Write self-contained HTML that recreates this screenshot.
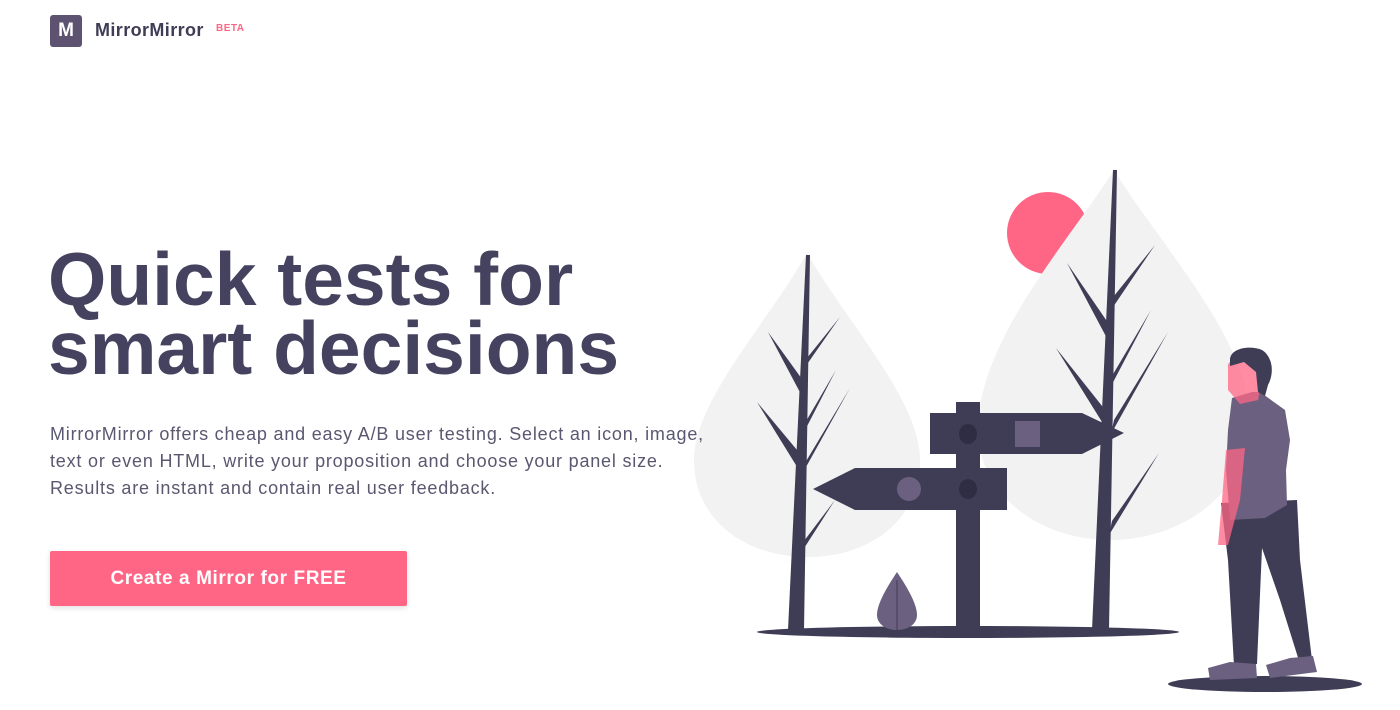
<!DOCTYPE html>
<html><head><meta charset="utf-8"><style>
*{margin:0;padding:0;box-sizing:border-box}
body{width:1400px;height:710px;background:#fff;font-family:"Liberation Sans",sans-serif;position:relative;overflow:hidden}
.logo{position:absolute;left:50px;top:15px;width:32px;height:32px;background:#5d5370;border-radius:3px;color:#fff;font-weight:bold;font-size:19px;text-align:center;line-height:32px}
.brand{position:absolute;left:95px;top:20px;font-weight:bold;font-size:18px;letter-spacing:.4px;color:#3f3d56}
.beta{position:absolute;left:216px;top:23px;font-weight:bold;font-size:10px;letter-spacing:.5px;color:#ff6584}
h1{position:absolute;left:48px;top:245px;font-size:75px;line-height:69px;color:#45425f;font-weight:bold;z-index:2}
p{position:absolute;left:50px;top:421px;font-size:18px;line-height:27px;color:#5a5870;white-space:nowrap;letter-spacing:.8px;z-index:2}
.btn{position:absolute;left:50px;top:551px;width:357px;height:55px;background:#ff6584;color:#fff;font-weight:bold;font-size:19px;letter-spacing:.6px;text-align:center;line-height:55px;border-radius:2px;box-shadow:0 2px 6px rgba(0,0,0,.12)}
svg{position:absolute;left:0;top:0;z-index:1}
</style></head><body>
<div class="logo">M</div>
<div class="brand">MirrorMirror</div>
<div class="beta">BETA</div>
<h1>Quick tests for<br>smart decisions</h1>
<p>MirrorMirror offers cheap and easy A/B user testing. Select an icon, image,<br>text or even HTML, write your proposition and choose your panel size.<br>Results are instant and contain real user feedback.</p>
<div class="btn">Create a Mirror for FREE</div>
<svg width="1400" height="710" viewBox="0 0 1400 710">
<circle cx="1048" cy="233" r="41" fill="#ff6584"/>
<path d="M1114,170 C1070,240 978,340 978,430 C978,495 1040,540 1110,540 C1185,540 1250,490 1250,420 C1250,340 1160,245 1114,170Z" fill="#f2f2f2"/>
<path d="M807,253 C770,320 694,400 694,460 C694,520 745,557 808,557 C870,557 920,520 920,460 C920,400 845,320 807,253Z" fill="#f2f2f2"/>
<g fill="#3f3d56">
<path d="M806,255 L810,255 L804,630 L788,630Z"/>
<path d="M768,332 L807,386 L803,398Z"/>
<path d="M840,317 L807,358 L803,370Z"/>
<path d="M836,370 L805,423 L802,436Z"/>
<path d="M757,402 L802,456 L799,470Z"/>
<path d="M850,388 L805,463 L801,476Z"/>
<path d="M835,500 L804,541 L801,553Z"/>
<path d="M1113,170 L1117,170 L1109,630 L1092,630Z"/>
<path d="M1067,263 L1113,330 L1110,344Z"/>
<path d="M1155,245 L1114,296 L1111,310Z"/>
<path d="M1151,310 L1112,376 L1109,390Z"/>
<path d="M1056,348 L1110,416 L1107,430Z"/>
<path d="M1168,332 L1114,420 L1111,434Z"/>
<path d="M1159,453 L1112,521 L1109,535Z"/>
<ellipse cx="968" cy="632" rx="211" ry="6"/>
<rect x="956" y="402" width="24" height="232"/>
<path d="M930,413 L1082,413 L1124,433 L1082,454 L930,454Z"/>
<path d="M1007,468 L855,468 L813,489 L855,510 L1007,510Z"/>
<ellipse cx="1265" cy="684" rx="97" ry="8"/>
</g>
<ellipse cx="968" cy="434" rx="9" ry="10" fill="#2f2d44"/>
<rect x="1015" y="421" width="25" height="26" fill="#6c6080"/>
<ellipse cx="909" cy="489" rx="12" ry="12" fill="#6c6080"/>
<ellipse cx="968" cy="489" rx="9" ry="10" fill="#2f2d44"/>
<path d="M897,572 C885,590 877,605 877,615 C877,624 886,630 897,630 C908,630 917,624 917,615 C917,605 909,590 897,572Z" fill="#6c6080"/>
<path d="M897,580 L897,630" stroke="#3f3d56" stroke-width="1"/>
<path d="M1221,503 L1297,500 L1300,560 L1312,660 L1300,664 L1280,600 L1262,548 L1257,664 L1234,666 L1228,560Z" fill="#3f3d56"/>
<path d="M1208,668 L1230,662 L1256,664 L1257,678 L1210,680Z" fill="#6c6080"/>
<path d="M1266,665 L1290,658 L1313,656 L1317,672 L1270,678Z" fill="#6c6080"/>
<path d="M1232,398 L1252,392 L1260,392 L1285,410 L1290,440 L1286,470 L1287,505 L1265,518 L1230,520 L1226,470 L1228,430Z" fill="#6c6080"/>
<path d="M1226,450 L1245,448 L1240,500 L1228,545 L1218,545 L1222,500Z" fill="#ff6584" opacity=".75"/>
<path d="M1228,368 C1226,360 1240,355 1250,362 L1262,380 L1258,400 L1240,404 L1228,390Z" fill="#ff6584" opacity=".75"/>
<path d="M1230,360 C1230,348 1250,345 1262,350 C1272,356 1275,372 1268,385 L1265,396 L1258,392 L1256,372 L1244,362 L1230,366Z" fill="#3f3d56"/>
</svg>
</body></html>
